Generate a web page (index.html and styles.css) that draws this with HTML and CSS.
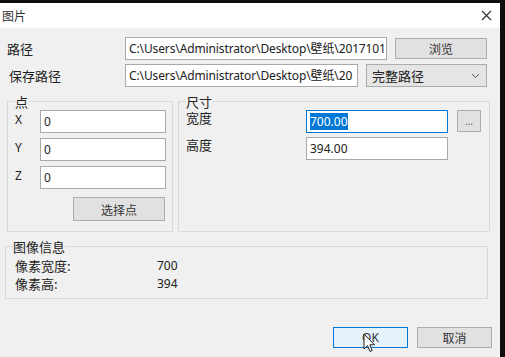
FILE: index.html
```html
<!DOCTYPE html>
<html lang="zh-CN">
<head>
    <meta charset="UTF-8">
    <title>图片</title>
    <link rel="stylesheet" href="styles.css">
</head>
<body>
    <div class="window">
        <div class="titlebar">
            <span class="title">图片</span>
            <svg class="close" width="11" height="11" viewBox="0 0 11 11">
                <path d="M1 1 L10 10 M10 1 L1 10" stroke="#333" stroke-width="1.2" fill="none"/>
            </svg>
        </div>

        <div class="content">
            <div class="row">
                <span class="row-label">路径</span>
                <div class="field path-wide">C:\Users\Administrator\Desktop\壁纸\2017101</div>
                <button class="btn browse">浏览</button>
            </div>

            <div class="row row-save">
                <span class="row-label indent">保存路径</span>
                <div class="field path-narrow">C:\Users\Administrator\Desktop\壁纸\20</div>
                <div class="select">
                    <span>完整路径</span>
                    <svg width="9" height="6" viewBox="0 0 9 6">
                        <path d="M1 1 L4.5 4.5 L8 1" stroke="#555" stroke-width="1" fill="none"/>
                    </svg>
                </div>
            </div>

            <div class="groups">
                <fieldset class="group group-point">
                    <legend>点</legend>
                    <div class="coord">
                        <span class="coord-label">X</span>
                        <div class="field coord-field">0</div>
                    </div>
                    <div class="coord">
                        <span class="coord-label">Y</span>
                        <div class="field coord-field">0</div>
                    </div>
                    <div class="coord">
                        <span class="coord-label">Z</span>
                        <div class="field coord-field">0</div>
                    </div>
                    <button class="btn pick">选择点</button>
                </fieldset>

                <fieldset class="group group-size">
                    <legend>尺寸</legend>
                    <div class="size-row">
                        <span class="size-label">宽度</span>
                        <div class="field size-field focused"><span class="selected">700.00</span></div>
                        <button class="btn more">...</button>
                    </div>
                    <div class="size-row">
                        <span class="size-label">高度</span>
                        <div class="field size-field">394.00</div>
                    </div>
                </fieldset>
            </div>

            <fieldset class="group group-info">
                <legend>图像信息</legend>
                <div class="info-row">
                    <span class="info-label">像素宽度:</span>
                    <span class="info-value">700</span>
                </div>
                <div class="info-row">
                    <span class="info-label">像素高:</span>
                    <span class="info-value">394</span>
                </div>
            </fieldset>

            <div class="actions">
                <button class="btn ok">OK</button>
                <button class="btn">取消</button>
            </div>
        </div>

        <!-- mouse pointer over the OK button -->
        <svg class="cursor" width="13" height="20" viewBox="0 0 13 20">
            <path d="M1 1 L1 16 L4.5 12.5 L7 18.5 L9.2 17.6 L6.8 11.8 L11.5 11.8 Z" fill="#fff" stroke="#222" stroke-width="1"/>
        </svg>
    </div>
</body>
</html>
```

FILE: styles.css
```css
body {
    margin: 0;
    background-color: #0e0e0e;
    font-family: "Noto Sans", "Noto Sans CJK SC", sans-serif;
    font-size: 12px;
    color: #222;
}

.window {
    position: relative;
    width: 500px;
    height: 354px;
    margin-top: 3px;
    background-color: #f0f0f0;
    overflow: hidden;
}

.titlebar {
    height: 25px;
    background-color: #fff;
    display: flex;
    align-items: center;
    justify-content: space-between;
    padding: 0 8px 0 2px;
}

.title {
    font-family: "Noto Sans CJK SC", sans-serif;
    font-size: 12px;
    color: #333;
}

.content {
    padding: 9px 8px 0 5px;
}

.row {
    display: flex;
    align-items: center;
    margin-left: 2px;
    height: 23px;
}

.row-save {
    margin-top: 4px;
}

.row-label {
    width: 118px;
    font-family: "Noto Sans CJK SC", sans-serif;
    font-size: 13px;
}

.row-label.indent {
    padding-left: 2px;
    width: 116px;
}

.field {
    box-sizing: border-box;
    height: 23px;
    padding: 0 3px;
    background-color: #fff;
    border: 1px solid #a9a9a9;
    line-height: 21px;
    white-space: nowrap;
    overflow: hidden;
    font-family: "Noto Sans", "Noto Sans CJK SC", sans-serif;
    font-size: 12px;
}

.path-wide,
.path-narrow {
    letter-spacing: -0.12px;
}

.path-wide {
    width: 262px;
}

.path-narrow {
    width: 233px;
}

.btn {
    box-sizing: border-box;
    height: 21px;
    padding: 0;
    background-color: #e1e1e1;
    border: 1px solid #adadad;
    font-family: "Noto Sans CJK SC", sans-serif;
    font-size: 12px;
    color: #333;
}

.browse {
    width: 92px;
    margin-left: 8px;
}

.select {
    box-sizing: border-box;
    width: 121px;
    height: 23px;
    margin-left: 8px;
    padding: 0 6px 0 5px;
    display: flex;
    align-items: center;
    justify-content: space-between;
    background-color: #e5e5e5;
    border: 1px solid #acacac;
    font-family: "Noto Sans CJK SC", sans-serif;
    font-size: 13px;
}

.groups {
    display: flex;
    gap: 5px;
    margin: 7px 0 0 2px;
}

.group {
    box-sizing: border-box;
    margin: 0;
    padding: 0;
    border: 1px solid #dadada;
    min-width: 0;
}

.group legend {
    padding: 0;
    margin-left: 7px;
    font-family: "Noto Sans CJK SC", sans-serif;
    font-size: 13px;
    line-height: 15px;
}

.group-point,
.group-size {
    padding-top: 1px;
}

.group-point {
    width: 166px;
    height: 138px;
}

.group-size {
    width: 312px;
    height: 138px;
}

.coord {
    display: flex;
    align-items: flex-start;
    margin-bottom: 5px;
}

.coord-label {
    width: 32px;
    padding-left: 7px;
    box-sizing: border-box;
    margin-top: 1px;
    font-size: 12px;
}

.coord-field {
    width: 126px;
}

.pick {
    width: 92px;
    height: 24px;
    margin: 3px 0 0 65px;
}

.size-row {
    display: flex;
    align-items: flex-start;
    margin-bottom: 4px;
}

.size-label {
    width: 127px;
    padding-left: 7px;
    box-sizing: border-box;
    margin-top: 1px;
    font-family: "Noto Sans CJK SC", sans-serif;
    font-size: 13px;
    line-height: 14px;
}

.size-field {
    width: 142px;
}

.focused {
    border-color: #0078d7;
}

.selected {
    background-color: #0078d7;
    color: #fff;
}

.more {
    width: 24px;
    height: 22px;
    margin-left: 9px;
    font-family: "Noto Sans", sans-serif;
    font-size: 10px;
    color: #666;
}

.group-info {
    width: 483px;
    height: 60px;
    margin-top: 7px;
    padding-top: 3px;
}

.info-row {
    display: flex;
    line-height: 18px;
}

.info-label {
    width: 151px;
    padding-left: 9px;
    box-sizing: border-box;
    font-family: "Noto Sans CJK SC", sans-serif;
    font-size: 13px;
}

.info-value {
    font-size: 12px;
}

.actions {
    display: flex;
    justify-content: flex-end;
    gap: 9px;
    margin-top: 28px;
}

.actions .btn {
    width: 75px;
}

.actions .ok {
    background-color: #e5f1fb;
    border-color: #0078d7;
    font-family: "Noto Sans", sans-serif;
}

.cursor {
    position: absolute;
    left: 363px;
    top: 330px;
}
```
